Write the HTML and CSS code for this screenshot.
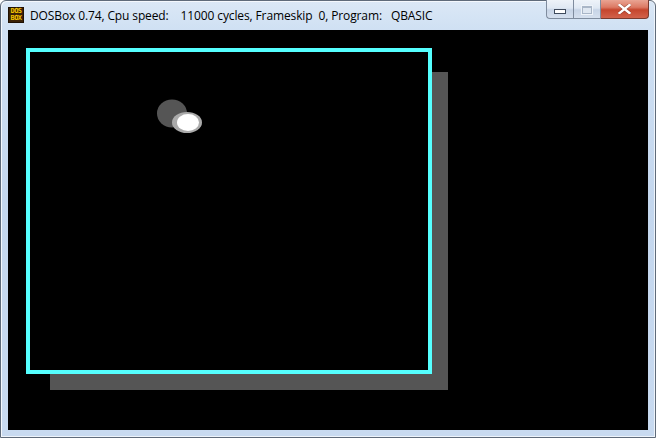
FILE: index.html
```html
<!DOCTYPE html>
<html>
<head>
<meta charset="utf-8">
<link rel="stylesheet" href="styles.css">
</head>
<body>
<div class="window">
  <div class="titlebar">
    <div class="appicon"><span>DOS</span><span>BOX</span></div>
    <div class="title">DOSBox 0.74, Cpu speed:    11000 cycles, Frameskip  0, Program:   QBASIC</div>
    <div class="buttons">
      <div class="btn btn-min"><span class="min-glyph"></span></div>
      <div class="btn btn-max"><span class="max-glyph"></span></div>
      <div class="btn btn-close">
        <svg width="13" height="10" viewBox="0 0 13 10">
          <path d="M1.5 1 L11.5 9 M11.5 1 L1.5 9" stroke="#5a1d12" stroke-width="3.6" stroke-linecap="square" opacity="0.45"/>
          <path d="M1.5 1 L11.5 9 M11.5 1 L1.5 9" stroke="#ffffff" stroke-width="2.4" stroke-linecap="square"/>
        </svg>
      </div>
    </div>
  </div>
  <div class="body">
    <div class="client">
      <svg class="screen" width="640" height="400" viewBox="0 0 640 400">
        <rect x="42" y="42" width="398" height="318" fill="#555555"/>
        <rect x="20" y="20" width="402" height="322" fill="#000000" stroke="#55ffff" stroke-width="4"/>
        <ellipse cx="164" cy="83.5" rx="15" ry="14" fill="#555555"/>
        <ellipse cx="179" cy="92.5" rx="15" ry="10.5" fill="#aaaaaa"/>
        <ellipse cx="180" cy="92.5" rx="11" ry="8.5" fill="#ffffff"/>
      </svg>
    </div>
  </div>
</div>
</body>
</html>
```
FILE: styles.css
```css
html, body {
  margin: 0;
  padding: 0;
  width: 656px;
  height: 438px;
  overflow: hidden;
  background: #ffffff;
}
.window {
  width: 656px;
  height: 438px;
  box-sizing: border-box;
  border: 1px solid #5f6b7a;
  border-radius: 6px 6px 0 0;
  background: linear-gradient(to bottom, #dbe8f6 0px, #cfe0f3 30px, #c4d7ee 200px, #c8daf0 438px);
  display: flex;
  flex-direction: column;
  box-shadow: inset 1px 1px 0 #f4f8fd, inset -1px -1px 0 #eef4fb;
}
.titlebar {
  height: 29px;
  display: flex;
  align-items: flex-start;
  position: relative;
}
.appicon {
  margin: 6px 0 0 7px;
  width: 16px;
  height: 16px;
  box-sizing: border-box;
  background: #3b2206;
  border: 1px solid #1e1002;
  display: flex;
  flex-direction: column;
  align-items: center;
  justify-content: center;
  font-family: "DejaVu Sans Mono", monospace;
  font-weight: bold;
  font-size: 7px;
  line-height: 7px;
  color: #f3c400;
  letter-spacing: -0.6px;
}
.title {
  margin: 7px 0 0 6px;
  font-family: "Open Sans", "Noto Sans", sans-serif;
  font-size: 12px;
  line-height: 16px;
  color: #000000;
  white-space: pre;
  letter-spacing: -0.12px;
}
.buttons {
  position: absolute;
  top: -1px;
  right: 6px;
  display: flex;
}
.btn {
  height: 19px;
  box-sizing: border-box;
  border: 1px solid #7f8c9e;
  border-top: 0;
  display: flex;
  align-items: center;
  justify-content: center;
}
.btn-min {
  width: 27px;
  border-radius: 0 0 0 4px;
  border-right: 0;
  background: linear-gradient(to bottom, #eef3f9 0%, #dfe8f3 45%, #c7d4e6 55%, #d5e0ee 100%);
}
.btn-max {
  width: 28px;
  background: linear-gradient(to bottom, #eef3f9 0%, #dfe8f3 45%, #c7d4e6 55%, #d5e0ee 100%);
}
.btn-close {
  width: 48px;
  border-left: 0;
  border-color: #7a3a2e;
  border-radius: 0 0 4px 0;
  background: linear-gradient(to bottom, #e9a493 0%, #dc7a64 40%, #c5452d 55%, #d2624b 100%);
}
.min-glyph {
  width: 10px;
  height: 3px;
  margin-top: 5px;
  background: #ffffff;
  border: 1px solid #3f4b5d;
}
.max-glyph {
  width: 8px;
  height: 5px;
  margin-top: 1px;
  border: 1px solid #a9b6c7;
  border-top-width: 2px;
  background: #dfe7f1;
  box-shadow: 0 0 0 1px #eef3f9;
}
.body {
  flex: 1;
  display: flex;
  padding: 0 7px 7px 7px;
}
.client {
  width: 640px;
  height: 400px;
  background: #000000;
}
.screen {
  display: block;
}
```
